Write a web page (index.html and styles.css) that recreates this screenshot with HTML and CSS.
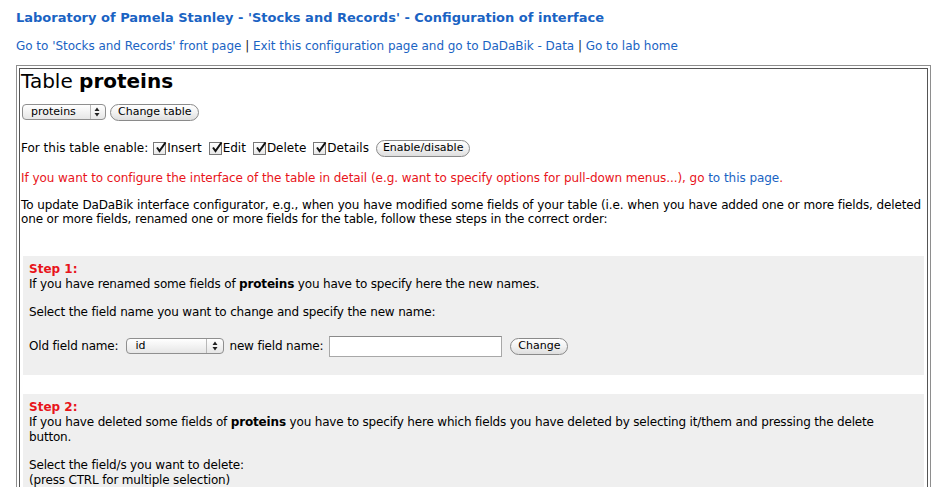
FILE: index.html
```html
<!DOCTYPE html>
<html>
<head>
<meta charset="utf-8">
<title>Configuration of interface</title>
<link rel="stylesheet" href="styles.css">
</head>
<body>
<h1 class="site-title">Laboratory of Pamela Stanley - 'Stocks and Records' - Configuration of interface</h1>
<nav class="top-links">
  <a href="#">Go to 'Stocks and Records' front page</a> | <a href="#">Exit this configuration page and go to DaDaBik - Data</a> | <a href="#">Go to lab home</a>
</nav>

<div class="frame">
  <div class="frame-inner">
    <h2 class="table-title">Table <b>proteins</b></h2>

    <form class="row row-table">
      <span class="sel sel-table">
        <select><option>proteins</option></select>
        <svg class="sel-arrows" width="14" height="14" viewBox="0 0 14 14"><path d="M7 2.5 L9.5 6 L4.5 6 Z M7 11.5 L9.5 8 L4.5 8 Z" fill="#222"/></svg>
      </span>
      <button type="button" class="btn">Change table</button>
    </form>

    <form class="row row-enable">
      <span class="lbl">For this table enable:</span>
      <label class="cb"><span class="box"><svg width="13" height="13" viewBox="0 0 13 13"><path d="M3 6.5 L5.5 10 L11.5 1.5" fill="none" stroke="#111" stroke-width="2"/></svg></span>Insert</label>
      <label class="cb"><span class="box"><svg width="13" height="13" viewBox="0 0 13 13"><path d="M3 6.5 L5.5 10 L11.5 1.5" fill="none" stroke="#111" stroke-width="2"/></svg></span>Edit</label>
      <label class="cb"><span class="box"><svg width="13" height="13" viewBox="0 0 13 13"><path d="M3 6.5 L5.5 10 L11.5 1.5" fill="none" stroke="#111" stroke-width="2"/></svg></span>Delete</label>
      <label class="cb"><span class="box"><svg width="13" height="13" viewBox="0 0 13 13"><path d="M3 6.5 L5.5 10 L11.5 1.5" fill="none" stroke="#111" stroke-width="2"/></svg></span>Details</label>
      <button type="button" class="btn">Enable/disable</button>
    </form>

    <p class="warn">If you want to configure the interface of the table in detail (e.g. want to specify options for pull-down menus...), go <a href="#">to this page</a>.</p>

    <p class="intro">To update DaDaBik interface configurator, e.g., when you have modified some fields of your table (i.e. when you have added one or more fields, deleted one or more fields, renamed one or more fields for the table, follow these steps in the correct order:</p>

    <section class="step step-1">
      <div class="step-label">Step 1:</div>
      <div>If you have renamed some fields of <b>proteins</b> you have to specify here the new names.</div>
      <p class="step-p">Select the field name you want to change and specify the new name:</p>
      <form class="row row-rename">
        <span class="lbl">Old field name:</span>
        <span class="sel sel-field">
          <select><option>id</option></select>
          <svg class="sel-arrows" width="14" height="14" viewBox="0 0 14 14"><path d="M7 2.5 L9.5 6 L4.5 6 Z M7 11.5 L9.5 8 L4.5 8 Z" fill="#222"/></svg>
        </span>
        <span class="lbl">new field name:</span>
        <input type="text" class="txt">
        <button type="button" class="btn">Change</button>
      </form>
    </section>

    <section class="step step-2">
      <div class="step-label">Step 2:</div>
      <div>If you have deleted some fields of <b>proteins</b> you have to specify here which fields you have deleted by selecting it/them and pressing the delete button.</div>
      <p class="step-p">Select the field/s you want to delete:<br>(press CTRL for multiple selection)</p>
    </section>
  </div>
</div>
</body>
</html>
```
FILE: styles.css
```css
html, body {
  margin: 0;
  padding: 0;
  background: #fff;
}
body {
  font-family: "DejaVu Sans", sans-serif;
  font-size: 12px;
  color: #000;
  padding: 10px 13px 0 16px;
}
a {
  color: #1a63c3;
  text-decoration: none;
}
.site-title {
  margin: 0;
  font-size: 13px;
  line-height: 16px;
  font-weight: bold;
  color: #1a63c3;
}
.top-links {
  margin-top: 12px;
  font-size: 12px;
  line-height: 16px;
  color: #222;
  letter-spacing: -0.03px;
}
.frame {
  margin-top: 11px;
  border: 1px solid #8e8e8e;
  padding: 2px;
}
.frame-inner {
  border: 1px solid #555;
  padding: 0 1px 40px 1px;
}
.table-title {
  margin: 0;
  font-size: 20px;
  line-height: 24px;
  font-weight: normal;
}
.row {
  display: flex;
  align-items: center;
  margin: 0;
}
.row-table {
  margin-top: 11px;
  height: 16px;
  gap: 4px;
  padding-left: 1px;
}
.sel {
  position: relative;
  display: inline-flex;
  height: 16px;
  box-sizing: border-box;
  border: 1px solid #8f8f8f;
  border-radius: 4px;
  background: linear-gradient(#ffffff, #e6e6e6);
}
.sel select {
  appearance: none;
  -webkit-appearance: none;
  border: 0;
  background: transparent;
  font-family: inherit;
  font-size: 11px;
  line-height: 14px;
  height: 14px;
  padding: 0 0 0 8px;
  margin: 0;
  color: #000;
  border-right: 1px solid #b8b8b8;
}
.sel-table select { width: 68px; }
.sel-field select { width: 80px; }
.sel-arrows {
  position: absolute;
  right: 1px;
  top: 0;
}
.sel-table { width: 84px; }
.sel-field { width: 98px; }
.btn {
  height: 17px;
  box-sizing: border-box;
  border: 1px solid #8a8a8a;
  border-radius: 9px;
  background: linear-gradient(#ffffff 0%, #f2f2f2 50%, #dedede 100%);
  font-family: inherit;
  font-size: 11px;
  line-height: 14px;
  padding: 0 6px;
  margin: 0;
  color: #000;
}
.row-table .btn { padding: 0 7px; }
.row-enable {
  margin-top: 19px;
  height: 18px;
}
.row-enable .lbl { margin-right: 5px; }
.cb {
  display: inline-flex;
  align-items: center;
  margin-right: 7px;
}
.cb .box {
  display: inline-block;
  width: 13px;
  height: 13px;
  box-sizing: border-box;
  border: 1px solid #777;
  background: linear-gradient(#fff, #e8e8e8);
  margin-right: 1px;
  position: relative;
}
.cb .box svg {
  position: absolute;
  left: 0;
  top: -2px;
}
.warn {
  margin: 14px 0 0;
  line-height: 14px;
  color: #e8141a;
  letter-spacing: -0.05px;
}
.intro {
  margin: 13px 5px 0 0;
  line-height: 14px;
  text-align: justify;
  letter-spacing: -0.15px;
}
.step {
  background: #efefef;
  margin: 0 2px 0 2px;
  padding: 6px 6px 18px 6px;
  line-height: 15px;
  letter-spacing: -0.17px;
}
.step-1 { margin-top: 30px; }
.step-2 { margin-top: 19px; }
.step-label {
  color: #e8141a;
  font-weight: bold;
  letter-spacing: 0;
}
.step-p { margin: 13px 0 0; }
.row-rename {
  margin-top: 15px;
  height: 22px;
  letter-spacing: 0;
}
.row-rename .lbl { margin-right: 5px; letter-spacing: -0.17px; }
.row-rename .lbl:first-child { margin-right: 8px; }
.row-rename .sel-field { margin-right: 5px; }
.txt {
  width: 173px;
  height: 21px;
  box-sizing: border-box;
  border: 1px solid #a8a8a8;
  border-top-color: #8a8a8a;
  background: #fff;
  margin: 0 8px 0 1px;
  padding: 0 3px;
}
.row-rename .btn { padding: 0 7px; }
```
